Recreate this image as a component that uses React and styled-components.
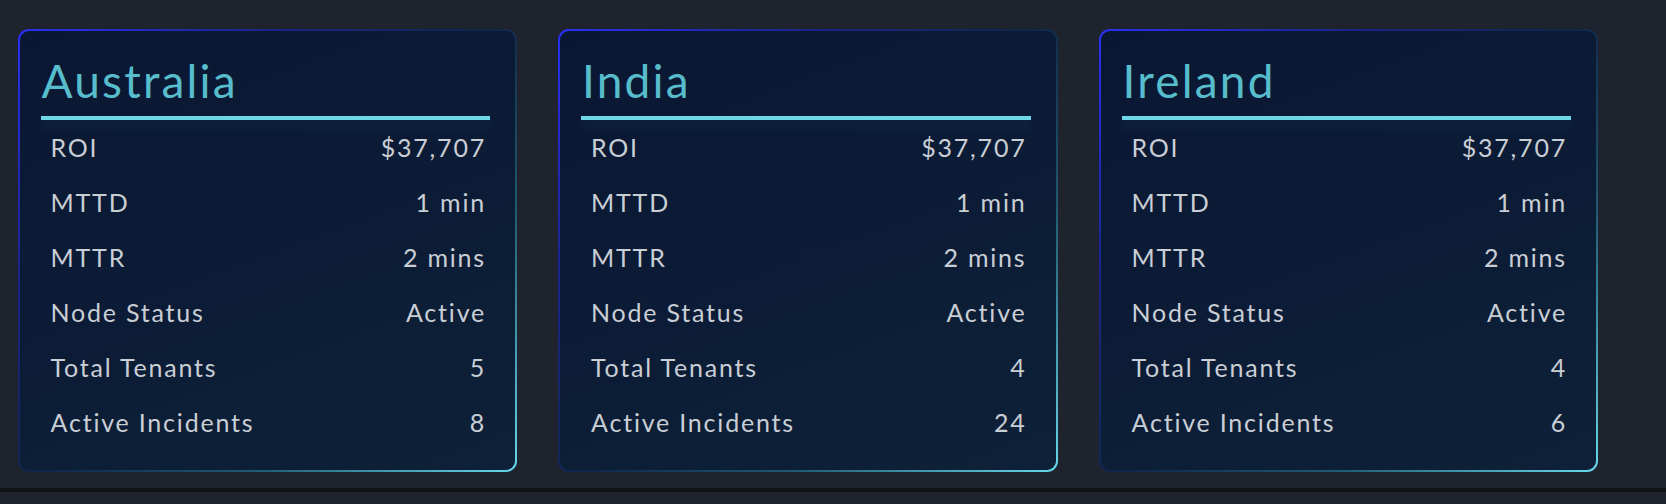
import React from 'react';
import styled, {createGlobalStyle} from 'styled-components';

const GlobalStyle = createGlobalStyle`
  html, body {
    margin: 0;
    padding: 0;
    background: #1f232e;
  }
  body {
    font-family: Lato, "Noto Sans", sans-serif;
  }
`;

const Strip = styled.section`
  display: flex;
  flex-flow: row nowrap;
  gap: 41px;
  height: 492px;
  padding: 29px 0 0 17.5px;
  box-sizing: border-box;
  border-bottom: 4px solid #111318;
`;

const Card = styled.div`
  width: 499.5px;
  height: 443px;
  box-sizing: border-box;
  padding: 21px 25px 20px 21px;
  border: 2px solid transparent;
  border-radius: 11px;
  background:
    linear-gradient(160deg, #0a1733 0%, #0c1c36 55%, #0e2138 100%) padding-box,
    linear-gradient(135deg, #2b30f5 0%, #1a2590 25%, #10264a 50%, #1f5a70 72%, #66d8ea 100%) border-box;
`;

const Title = styled.h2`
  margin: 0;
  padding: 1px 0 7.5px 1px;
  font-family: Lato, "Noto Sans", sans-serif;
  font-weight: 400;
  font-size: 46px;
  line-height: 1.2;
  letter-spacing: 2.2px;
  color: #57bccb;
`;

const Underline = styled.div`
  height: 4px;
  background: #6ed7e7;
  box-shadow: 0 7px 10px rgba(80, 170, 200, 0.14);
`;

const Row = styled.div`
  display: flex;
  justify-content: space-between;
  align-items: baseline;
  padding: 0 4px 0 10px;
  font-size: 25px;
  line-height: 55px;
  letter-spacing: 1.8px;
  color: #c9ced5;
`;

const cards = [
  {name: 'Australia', tenants: 5, incidents: 8},
  {name: 'India', tenants: 4, incidents: 24},
  {name: 'Ireland', tenants: 4, incidents: 6},
];

const RegionCard = ({name, tenants, incidents}) => {
  const rows = [
    ['ROI', '$37,707'],
    ['MTTD', '1 min'],
    ['MTTR', '2 mins'],
    ['Node Status', 'Active'],
    ['Total Tenants', tenants],
    ['Active Incidents', incidents],
  ];
  return <Card>
    <Title>{name}</Title>
    <Underline/>
    {rows.map(([label, value]) => {
      return <Row key={label}>
        <span>{label}</span>
        <span>{value}</span>
      </Row>
    })}
  </Card>;
};

export default function App() {
  return <>
    <GlobalStyle/>
    <Strip>
      {cards.map(card => <RegionCard key={card.name} {...card}/>)}
    </Strip>
  </>;
}
